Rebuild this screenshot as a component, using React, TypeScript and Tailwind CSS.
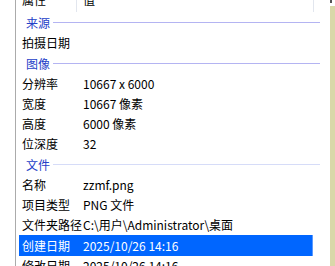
import React from "react";

type Item =
  | { kind: "group"; label: string; line: string }
  | { kind: "row"; name: string; value?: string; selected?: boolean; tall?: boolean };

const items: Item[] = [
  { kind: "group", label: "来源", line: "bg-[#b4b4f2]" },
  { kind: "row", name: "拍摄日期" },
  { kind: "group", label: "图像", line: "bg-[#b4b4f2]" },
  { kind: "row", name: "分辨率", value: "10667 x 6000" },
  { kind: "row", name: "宽度", value: "10667 像素" },
  { kind: "row", name: "高度", value: "6000 像素" },
  { kind: "row", name: "位深度", value: "32" },
  { kind: "group", label: "文件", line: "bg-[#d6dcf8]" },
  { kind: "row", name: "名称", value: "zzmf.png" },
  { kind: "row", name: "项目类型", value: "PNG 文件" },
  { kind: "row", name: "文件夹路径", value: "C:\\用户\\Administrator\\桌面" },
  { kind: "row", name: "创建日期", value: "2025/10/26 14:16", selected: true, tall: true },
  { kind: "row", name: "修改日期", value: "2025/10/26 14:16" },
];

const App: React.FC = () => {
  return (
    <div
      className="w-[335px] h-[266px] overflow-hidden bg-white flex text-[12px] text-black"
      style={{ fontFamily: '"Noto Sans CJK SC", "Noto Sans", sans-serif' }}
    >
      {/* left gutter and border */}
      <div className="w-[15px] shrink-0 bg-white" />
      <div className="w-[1px] shrink-0 bg-[#ababab]" />

      {/* property list */}
      <div className="w-[314px] shrink-0 flex flex-col">
        {/* column header, scrolled partly out of view */}
        <div className="h-[12px] shrink-0 overflow-hidden flex">
          <div className="w-[60px] pl-[6px] -mt-[10px] h-[20px] flex items-center">属性</div>
          <div className="w-[1px] bg-[#e2e6ee]" />
          <div className="flex-1 pl-[6px] -mt-[10px] h-[20px] flex items-center">值</div>
          <div className="w-[1px] bg-[#e2e6ee]" />
          <div className="w-[16px]" />
        </div>

        {items.map((it, i) =>
          it.kind === "group" ? (
            <div key={i} className="h-[21px] shrink-0 flex items-center pl-[10px] pr-[10px]">
              <span className="text-[#2440c8]">{it.label}</span>
              <div className={`flex-1 h-[1px] ml-[3px] ${it.line}`} />
            </div>
          ) : (
            <div
              key={i}
              className={`${it.tall ? "h-[21px]" : "h-[20px]"} shrink-0 flex items-center ml-[3px] mr-[17px] whitespace-nowrap ${
                it.selected ? "bg-[#0066ff] text-white border-r border-[#5a9aff]" : ""
              }`}
            >
              <div className="w-[64px] pl-[3px] shrink-0">{it.name}</div>
              <div className="flex-1">{it.value}</div>
            </div>
          )
        )}
      </div>

      {/* scrollbar strip */}
      <div className="w-[5px] shrink-0 flex flex-col">
        <div className="h-[6px] flex">
          <div className="w-[2px] h-[3px] bg-[#555555]" />
        </div>
        <div className="flex-1 bg-[#d9d8a9]" />
      </div>
    </div>
  );
};

export default App;
